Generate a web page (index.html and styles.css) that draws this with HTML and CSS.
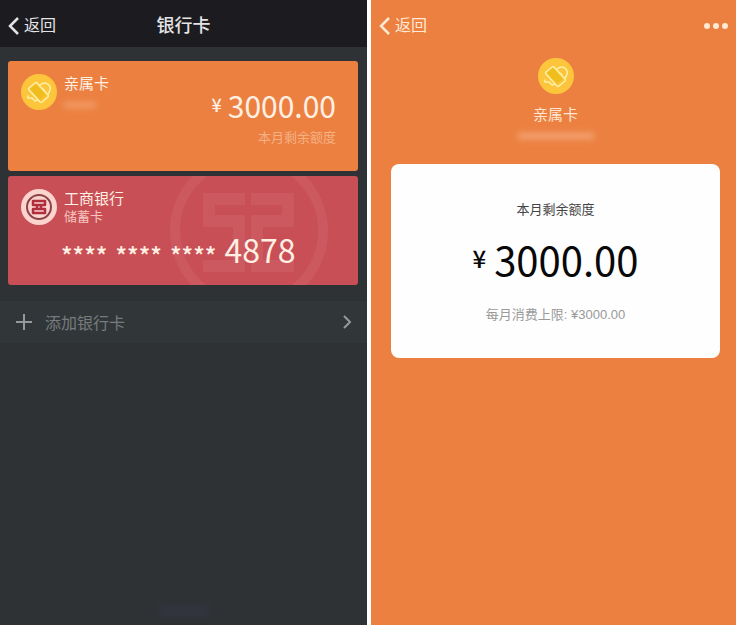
FILE: index.html
```html
<!DOCTYPE html>
<html lang="zh-CN">
<head>
<meta charset="utf-8">
<meta name="viewport" content="width=device-width, initial-scale=1">
<title>银行卡</title>
<link rel="stylesheet" href="styles.css">
</head>
<body>
<svg class="defs" aria-hidden="true">
  <symbol id="family" viewBox="0 0 36 36">
    <circle cx="18" cy="18" r="18" fill="#fcc53b"/>
    <path d="M9 15 15 10 25 21 19 26z" fill="#efbd1c"/>
    <path d="M8 14 14 9Q15 8 16 9L27 21Q28 22 27 23L21 28Q20 29 19 28L8 16Q7 15 8 14zM7 22Q6 23 7 24L11 24 14 27 17 26M19 11Q24 7 28 11 31 15 27 20M22 15 24 17" fill="none" stroke="#fff0a8" stroke-width="1.500" stroke-linejoin="round" stroke-linecap="round"/>
  </symbol>
  <symbol id="back" viewBox="0 0 12 20">
    <path d="M10 2 2 10 10 18" fill="none" stroke="currentColor" stroke-width="2.500"/>
  </symbol>
  <symbol id="icbc" viewBox="0 0 160 160">
    <circle cx="80" cy="80" r="74" fill="none" stroke="currentColor" stroke-width="10"/>
    <path d="M34 42H76V54H46V64H76V121H34V109H64V76H34zM82 42H125V76H94V109H125V121H82V64H113V54H82z" fill="currentColor"/>
  </symbol>
</svg>
<div class="screens">
  <main class="wallet">
    <header class="bar bar-dark">
      <button class="back" type="button"><svg><use href="#back"/></svg>返回</button>
      <h1>银行卡</h1>
    </header>
    <div class="cards">
      <section class="card family">
        <div class="head">
          <svg class="logo"><use href="#family"/></svg>
          <div><h2>亲属卡</h2><span class="smudge"></span></div>
        </div>
        <div class="balance">
          <p class="amount"><span class="yen">¥</span>3000.00</p>
          <p class="note">本月剩余额度</p>
        </div>
      </section>
      <section class="card bank">
        <svg class="watermark" aria-hidden="true"><use href="#icbc"/></svg>
        <div class="head">
          <svg class="logo" viewBox="0 0 36 36">
            <circle cx="18" cy="18" r="18" fill="#fbd3cf"/>
            <circle cx="18" cy="18" r="12" fill="none" stroke="#8c4348" stroke-width="2"/>
            <path d="M12 12H24V16H12zM12 20H24V24H12zM16 16V20M20 16V20" fill="none" stroke="#b02f3c" stroke-width="2.500" stroke-linejoin="round"/>
          </svg>
          <div><h2>工商银行</h2><p class="kind">储蓄卡</p></div>
        </div>
        <p class="number"><span>****</span><span>****</span><span>****</span><b>4878</b></p>
      </section>
    </div>
    <button class="add" type="button">
      <svg class="plus" viewBox="0 0 18 18"><path d="M9 1V17M1 9H17" stroke="currentColor" stroke-width="2"/></svg>
      <span>添加银行卡</span>
      <svg class="chevron" viewBox="0 0 10 14"><path d="M2 1 8 7 2 13" fill="none" stroke="currentColor" stroke-width="2"/></svg>
    </button>
    <span class="footer-smudge"></span>
  </main>
  <section class="detail">
    <header class="bar">
      <button class="back" type="button"><svg><use href="#back"/></svg>返回</button>
      <button class="more" type="button" aria-label="更多"><i></i><i></i><i></i></button>
    </header>
    <div class="profile">
      <svg class="logo"><use href="#family"/></svg>
      <h2>亲属卡</h2>
      <span class="smudge wide"></span>
    </div>
    <div class="panel">
      <p class="label">本月剩余额度</p>
      <p class="total"><span class="yen">¥</span>3000.00</p>
      <p class="limit">每月消费上限: ¥3000.00</p>
    </div>
  </section>
</div>
</body>
</html>
```
FILE: styles.css
```css
* { box-sizing: border-box; }
body {
  margin: 0;
  background: #fff;
  font-family: "Liberation Sans", "Noto Sans CJK SC", sans-serif;
}
h1, h2, p { margin: 0; font-weight: 400; }
button {
  padding: 0;
  border: 0;
  background: none;
  color: inherit;
  font: inherit;
}
.defs { position: absolute; width: 0; height: 0; }
.screens {
  display: grid;
  grid-template-columns: 367fr 365fr;
  gap: 4px;
  min-height: 100vh;
}
.wallet {
  display: flex;
  flex-direction: column;
  background: #2e3234;
  color: #fff0e4;
}
.bar {
  display: grid;
  grid-template-columns: 1fr auto 1fr;
  align-items: center;
  height: 47px;
  padding: 4px 8px 0;
  color: #ffe9d2;
}
.bar-dark { background: #1b1b20; color: #e4e4e6; }
.bar h1 { font-size: 18px; line-height: 24px; font-weight: 500; }
.back {
  display: flex;
  align-items: center;
  justify-self: start;
  gap: 4px;
  font-size: 16px;
  line-height: 24px;
}
.back svg { width: 12px; height: 20px; }
.cards { display: grid; gap: 5px; padding: 14px 9px 0 8px; }
.card {
  position: relative;
  height: 110px;
  padding: 13px;
  border-radius: 3px;
  overflow: hidden;
}
.family { background: #ec8041; }
.bank { height: 109px; background: #c94f56; }
.head { position: relative; display: flex; gap: 7px; }
.logo { width: 36px; height: 36px; }
h2 { font-size: 15px; line-height: 20px; }
.kind { font-size: 13px; line-height: 16px; color: #f5c3bd; }
.smudge {
  display: block;
  width: 32px;
  height: 6px;
  margin-top: 8px;
  background: #f29c68;
  filter: blur(3px);
}
.balance { padding-right: 9px; margin-top: -24px; text-align: right; }
.amount, .total, .number { font-family: "Noto Sans CJK SC", sans-serif; }
.amount { font-size: 30px; line-height: 36px; }
.yen { font-weight: 500; }
.amount .yen { margin-right: 6px; font-size: 18px; vertical-align: 6px; }
.note { margin-top: 3px; font-size: 13px; line-height: 24px; color: #f5b184; }
.watermark {
  position: absolute;
  top: -25px;
  left: 161px;
  width: 160px;
  height: 160px;
  color: #cd5960;
}
.number {
  position: relative;
  display: flex;
  align-items: center;
  gap: 8px;
  padding-left: 40px;
  margin-top: 6px;
  line-height: 36px;
}
.number span { padding-top: 12px; font-size: 24px; line-height: 24px; font-weight: 500; }
.number b { font-size: 32px; font-weight: 400; }
.add {
  display: flex;
  align-items: center;
  gap: 12px;
  height: 42px;
  margin-top: 16px;
  padding: 0 15px;
  background: #313639;
  color: #96999b;
  font-size: 16px;
  text-align: left;
}
.add span { flex: 1; color: #777b7d; }
.plus { width: 18px; height: 18px; }
.chevron { width: 10px; height: 14px; }
.footer-smudge {
  align-self: center;
  width: 50px;
  height: 8px;
  margin: auto 0 10px;
  background: #343644;
  filter: blur(4px);
}
.detail { background: #ec8041; color: #ffe5d0; }
.more {
  grid-column: 3;
  justify-self: end;
  display: flex;
  gap: 3px;
}
.more i { width: 6px; height: 6px; border-radius: 50%; background: currentColor; }
.profile {
  display: flex;
  flex-direction: column;
  align-items: center;
  padding: 11px 16px 0 20px;
}
.profile h2 { margin-top: 11px; }
.smudge.wide { width: 76px; background: #f4a577; }
.panel {
  height: 194px;
  margin: 25px 16px 0 20px;
  padding-top: 34px;
  border-radius: 8px;
  background: #fefefe;
  text-align: center;
}
.label { font-size: 13px; line-height: 24px; color: #444; }
.total {
  margin-top: 12px;
  font-size: 40px;
  line-height: 48px;
  color: #080808;
}
.total .yen { margin-right: 8px; font-size: 24px; vertical-align: 8px; }
.limit { margin-top: 20px; font-size: 13px; line-height: 24px; color: #999; }
```
